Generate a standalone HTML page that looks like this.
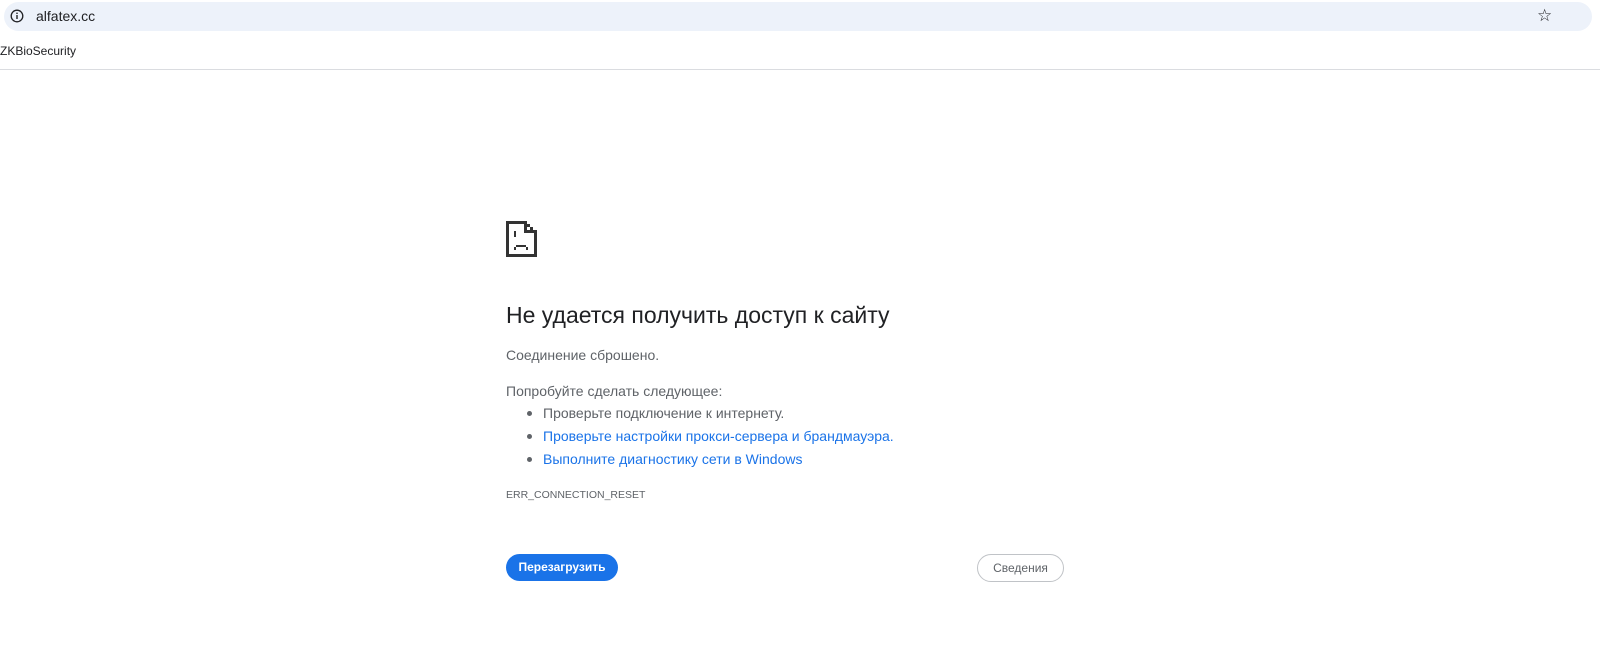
<!DOCTYPE html>
<html><head><meta charset="utf-8"><style>
html,body{margin:0;padding:0;width:1600px;height:665px;background:#fff;overflow:hidden;font-family:"Liberation Sans",sans-serif;}
.a{position:absolute;white-space:nowrap;}
#bar{position:absolute;left:4px;top:2px;width:1588px;height:29px;background:#edf2fa;border-radius:15px;}
.t{color:#5f6368;font-size:14px;}
.l{color:#1a73e8;font-size:14px;}
.dot{position:absolute;width:5px;height:5px;border-radius:50%;background:#5f6368;}
</style></head><body>
<div id="bar"></div>
<svg class="a" style="left:10px;top:9px" width="14" height="14" viewBox="0 0 14 14"><circle cx="7" cy="7" r="5.8" fill="none" stroke="#202124" stroke-width="1.3"/><rect x="6.3" y="6" width="1.4" height="4" fill="#202124"/><rect x="6.3" y="3.6" width="1.4" height="1.4" fill="#202124"/></svg>
<div class="a" style="left:36px;top:8px;font-size:14px;color:#202124">alfatex.cc</div>
<div class="a" style="left:1537px;top:6px;font-size:17px;color:#202124">☆</div>
<div class="a" style="left:0;top:44px;font-size:12px;color:#202124">ZKBioSecurity</div>
<div class="a" style="left:0;top:69px;width:1600px;height:1px;background:#dadce0"></div>

<svg class="a" style="left:506px;top:221px" width="31" height="36" viewBox="0 0 31 36">
<g fill="#333">
<rect x="0" y="0" width="20" height="3"/>
<rect x="0" y="0" width="3" height="36"/>
<rect x="0" y="33" width="31" height="3"/>
<rect x="28" y="10" width="3" height="26"/>
<rect x="18" y="0" width="3" height="12"/>
<rect x="18" y="9" width="13" height="3"/>
<rect x="21" y="3" width="3" height="3"/>
<rect x="24" y="6" width="3" height="3"/>
<rect x="8" y="10" width="2" height="6"/>
<rect x="8" y="26" width="2" height="3"/>
<rect x="10" y="24" width="10" height="2"/>
<rect x="20" y="26" width="2" height="3"/>
</g></svg>

<div class="a" style="left:506px;top:302px;font-size:23px;color:#202124">Не удается получить доступ к сайту</div>
<div class="a t" style="left:506px;top:347px">Соединение сброшено.</div>
<div class="a t" style="left:506px;top:383px">Попробуйте сделать следующее:</div>
<div class="dot" style="left:527px;top:411px"></div>
<div class="a t" style="left:543px;top:405px">Проверьте подключение к интернету.</div>
<div class="dot" style="left:527px;top:434px"></div>
<div class="a l" style="left:543px;top:428px">Проверьте настройки прокси-сервера и брандмауэра.</div>
<div class="dot" style="left:527px;top:457px"></div>
<div class="a l" style="left:543px;top:451px">Выполните диагностику сети в Windows</div>
<div class="a" style="left:506px;top:489px;font-size:10.5px;color:#5f6368">ERR_CONNECTION_RESET</div>

<div class="a" style="left:506px;top:554px;width:112px;height:27px;background:#1a73e8;border-radius:14px;color:#fff;font-size:12px;font-weight:bold;text-align:center;line-height:27px">Перезагрузить</div>
<div class="a" style="left:977px;top:554px;width:85px;height:26px;border:1px solid #c0c3c7;border-radius:14px;color:#5f6368;font-size:12px;text-align:center;line-height:26px">Сведения</div>
</body></html>
